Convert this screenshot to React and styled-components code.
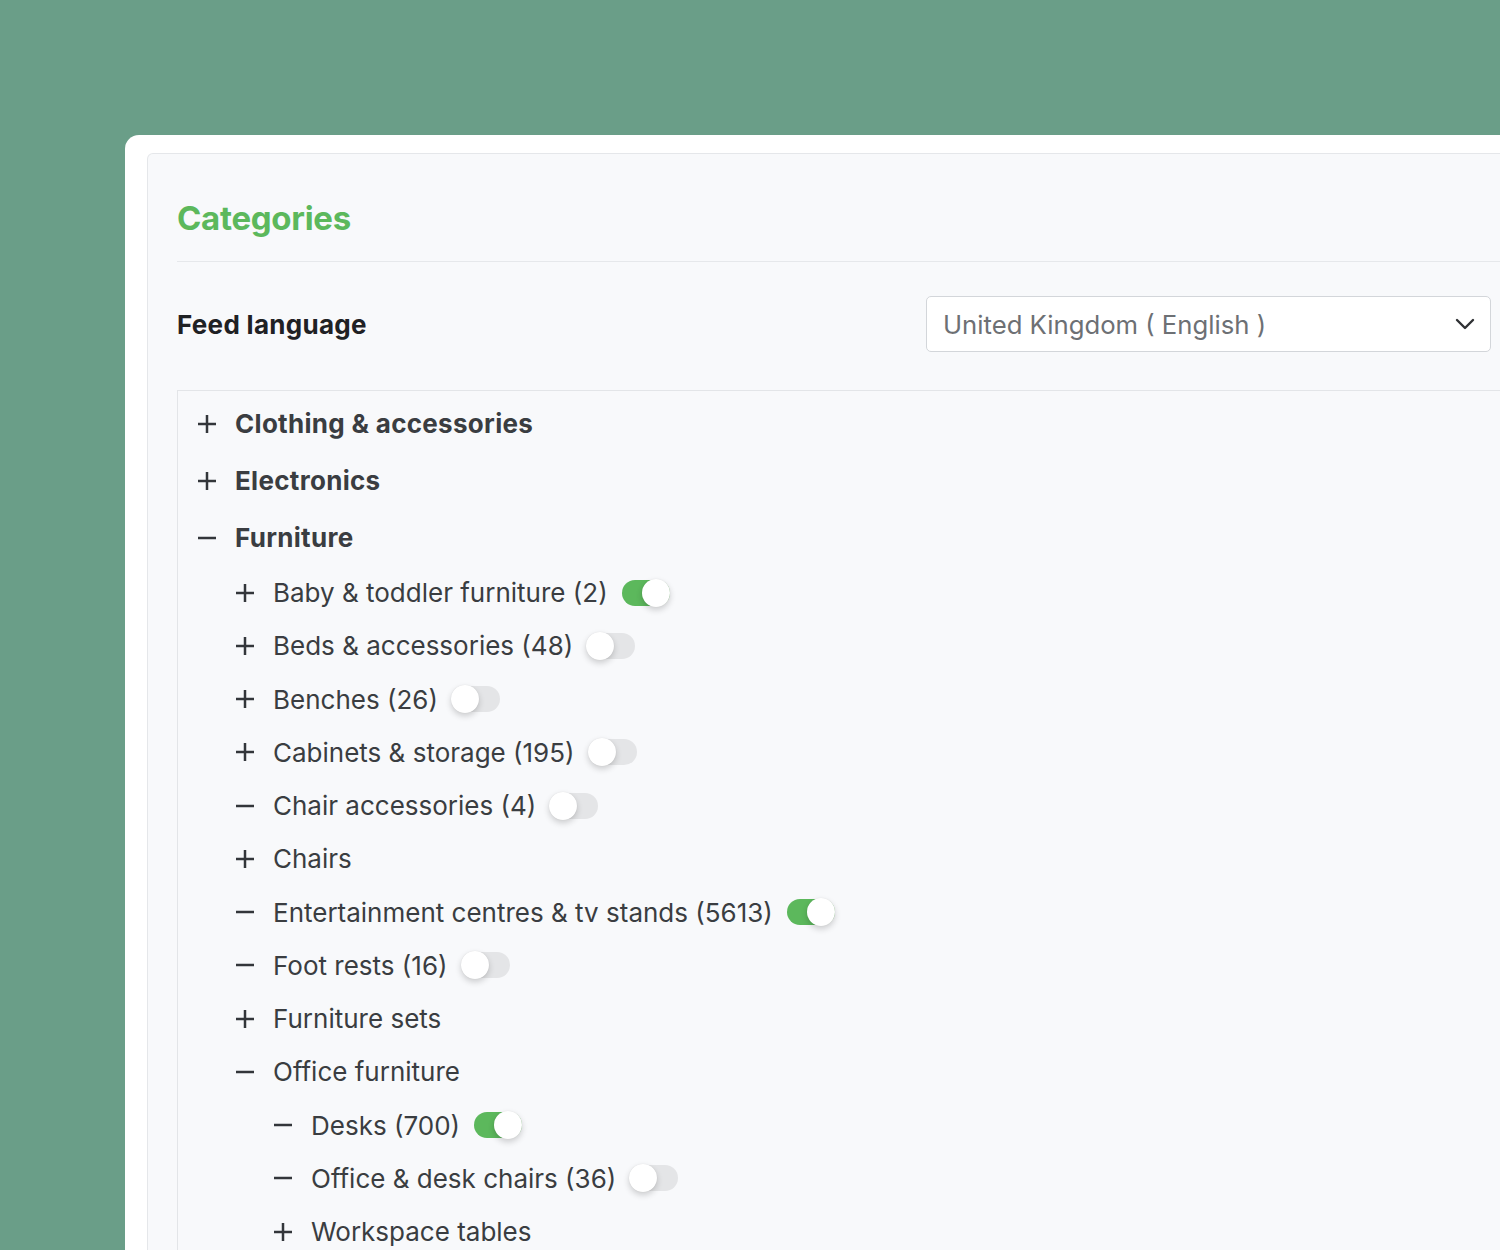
import React, { useState } from "react";
import styled, { createGlobalStyle } from "styled-components";

const GlobalStyle = createGlobalStyle`
  html, body {
    margin: 0;
    padding: 0;
    background: #6a9e88;
    font-family: Inter, "Open Sans", "Liberation Sans", sans-serif;
    -webkit-font-smoothing: antialiased;
  }
  body {
    width: 1500px;
    height: 1250px;
    overflow: hidden;
  }
`;

const Page = styled.div`
  padding: 135px 0 0 125px;
  height: 1250px;
  box-sizing: border-box;
  overflow: hidden;
`;

const Card = styled.div`
  width: 1420px;
  height: 1115px;
  background: #ffffff;
  border-top-left-radius: 14px;
  padding: 18px 0 0 22px;
  box-sizing: border-box;
`;

const Panel = styled.section`
  height: 100%;
  display: flex;
  flex-direction: column;
  background: #f8f9fb;
  border: 1px solid #e5e7ea;
  border-bottom: none;
  border-top-left-radius: 6px;
  padding-left: 29px;
  box-sizing: border-box;
  overflow: hidden;
`;

const Header = styled.header`
  height: 108px;
  flex-shrink: 0;
  display: flex;
  align-items: flex-end;
  padding-bottom: 26px;
  box-sizing: border-box;
  border-bottom: 1px solid #e6e8eb;
`;

const Title = styled.h2`
  margin: 0;
  font-size: 33px;
  font-weight: 700;
  letter-spacing: -0.3px;
  color: #5cb85c;
  line-height: 1;
`;

const FieldRow = styled.div`
  display: flex;
  align-items: center;
  justify-content: space-between;
  padding: 34px 53px 38px 0;
  flex-shrink: 0;
`;

const FieldLabel = styled.label`
  font-size: 26px;
  font-weight: 700;
  letter-spacing: 0.3px;
  color: #1f2124;
`;

const Select = styled.div`
  width: 565px;
  height: 56px;
  box-sizing: border-box;
  display: flex;
  align-items: center;
  justify-content: space-between;
  padding: 0 14px 0 16px;
  background: #ffffff;
  border: 1px solid #d3d6da;
  border-radius: 5px;
  font-size: 25.7px;
  color: #6d7074;
`;

const Tree = styled.div`
  flex: 1;
  border: 1px solid #e3e5e8;
  border-right: none;
  border-bottom: none;
  padding: 4px 0 0 20px;
`;

const Row = styled.div`
  display: flex;
  align-items: center;
  height: ${(p) => (p.$level === 0 ? "57px" : "53.25px")};
  padding-left: ${(p) => p.$level * 38}px;
  color: #3a3d41;
  font-size: 26px;
  font-weight: ${(p) => (p.$level === 0 ? 700 : 400)};
  letter-spacing: ${(p) => (p.$level === 0 ? "0.3px" : "0px")};
`;

const Expander = styled.span`
  display: inline-flex;
  width: 18px;
  height: 18px;
  margin-right: 19px;
  flex-shrink: 0;
`;

const Label = styled.span`
  white-space: nowrap;
`;

const Switch = styled.button`
  position: relative;
  width: 48px;
  height: 26px;
  margin-left: 14px;
  padding: 0;
  border: none;
  border-radius: 13px;
  background: ${(p) => (p.$on ? "#5cb85c" : "#e4e5e7")};
  cursor: pointer;
  flex-shrink: 0;

  &::after {
    content: "";
    position: absolute;
    top: -1px;
    left: ${(p) => (p.$on ? "20px" : "-1px")};
    width: 28px;
    height: 28px;
    border-radius: 50%;
    background: #ffffff;
    box-shadow: 0 3px 6px rgba(0, 0, 0, 0.18), 0 0 1px rgba(0, 0, 0, 0.12);
  }
`;

const PlusMinus = ({ open }) => (
  <svg width="18" height="18" viewBox="0 0 18 18" fill="none" stroke="#33363a" strokeWidth="2.5">
    <line x1="0" y1="9" x2="18" y2="9" />
    {!open && <line x1="9" y1="0" x2="9" y2="18" />}
  </svg>
);

const Chevron = () => (
  <svg width="22" height="22" viewBox="0 0 22 22" fill="none" stroke="#2f3134" strokeWidth="2.4" strokeLinecap="round" strokeLinejoin="round">
    <polyline points="3,7 11,15 19,7" />
  </svg>
);

const categories = [
  { label: "Clothing & accessories", level: 0 },
  { label: "Electronics", level: 0 },
  { label: "Furniture", level: 0, open: true },
  { label: "Baby & toddler furniture (2)", level: 1, toggle: true },
  { label: "Beds & accessories (48)", level: 1, toggle: false },
  { label: "Benches (26)", level: 1, toggle: false },
  { label: "Cabinets & storage (195)", level: 1, toggle: false },
  { label: "Chair accessories (4)", level: 1, open: true, toggle: false },
  { label: "Chairs", level: 1 },
  { label: "Entertainment centres & tv stands (5613)", level: 1, open: true, toggle: true },
  { label: "Foot rests (16)", level: 1, open: true, toggle: false },
  { label: "Furniture sets", level: 1 },
  { label: "Office furniture", level: 1, open: true },
  { label: "Desks (700)", level: 2, open: true, toggle: true },
  { label: "Office & desk chairs (36)", level: 2, open: true, toggle: false },
  { label: "Workspace tables", level: 2 },
];

function CategoryRow({ item }) {
  const [on, setOn] = useState(item.toggle);
  return (
    <Row $level={item.level}>
      <Expander>
        <PlusMinus open={item.open} />
      </Expander>
      <Label>{item.label}</Label>
      {item.toggle !== undefined && <Switch $on={on} onClick={() => setOn(!on)} />}
    </Row>
  );
}

export default function App() {
  return (
    <>
      <GlobalStyle />
      <Page>
        <Card>
          <Panel>
            <Header>
              <Title>Categories</Title>
            </Header>
            <FieldRow>
              <FieldLabel>Feed language</FieldLabel>
              <Select>
                <span>United Kingdom ( English )</span>
                <Chevron />
              </Select>
            </FieldRow>
            <Tree>
              {categories.map((item) => (
                <CategoryRow key={item.label} item={item} />
              ))}
            </Tree>
          </Panel>
        </Card>
      </Page>
    </>
  );
}
